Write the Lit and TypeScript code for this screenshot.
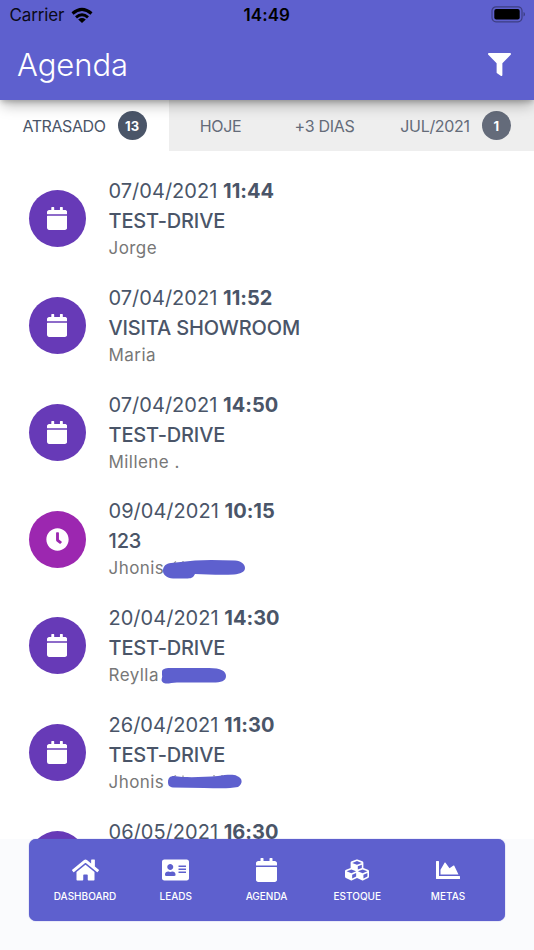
import { LitElement, html, css, svg } from "lit";
import { customElement, property } from "lit/decorators.js";
import { classMap } from "lit/directives/class-map.js";

const icons: Record<string, { w: number; d: string }> = {
  calendar: { w: 448, d: "M12 192h424c6.6 0 12 5.4 12 12v260c0 26.5-21.5 48-48 48H48c-26.5 0-48-21.5-48-48V204c0-6.6 5.4-12 12-12zm436-44v-36c0-26.5-21.5-48-48-48h-48V12c0-6.6-5.4-12-12-12h-40c-6.6 0-12 5.4-12 12v52H160V12c0-6.6-5.4-12-12-12h-40c-6.6 0-12 5.4-12 12v52H48C21.5 64 0 85.5 0 112v36c0 6.6 5.4 12 12 12h424c6.6 0 12-5.4 12-12z" },
  clock: { w: 512, d: "M256,8C119,8,8,119,8,256S119,504,256,504,504,393,504,256,393,8,256,8Zm92.49,313h0l-20,25a16,16,0,0,1-22.49,2.5h0l-67-49.72a40,40,0,0,1-15-31.23V112a16,16,0,0,1,16-16h32a16,16,0,0,1,16,16V256l58,42.5A16,16,0,0,1,348.49,321Z" },
  filter: { w: 512, d: "M487.976 0H24.028C2.71 0-8.047 25.866 7.058 40.971L192 225.941V432c0 7.831 3.821 15.17 10.237 19.662l80 55.98C298.02 518.69 320 507.493 320 487.98V225.941l184.947-184.97C520.021 25.896 509.338 0 487.976 0z" },
  home: { w: 576, d: "M280.37 148.26L96 300.11V464a16 16 0 0 0 16 16l112.06-.29a16 16 0 0 0 15.92-16V368a16 16 0 0 1 16-16h64a16 16 0 0 1 16 16v95.64a16 16 0 0 0 16 16.05L464 480a16 16 0 0 0 16-16V300L295.67 148.26a12.19 12.19 0 0 0-15.3 0zM571.6 251.47L488 182.56V44.05a12 12 0 0 0-12-12h-56a12 12 0 0 0-12 12v72.61L318.47 43a48 48 0 0 0-61 0L4.34 251.47a12 12 0 0 0-1.6 16.9l25.5 31A12 12 0 0 0 45.15 301l235.22-193.74a12.19 12.19 0 0 1 15.3 0L530.9 301a12 12 0 0 0 16.9-1.6l25.5-31a12 12 0 0 0-1.7-16.93z" },
  card: { w: 576, d: "M528 32H48C21.5 32 0 53.5 0 80v352c0 26.5 21.5 48 48 48h480c26.5 0 48-21.5 48-48V80c0-26.5-21.5-48-48-48zm-352 96c35.3 0 64 28.7 64 64s-28.7 64-64 64-64-28.7-64-64 28.7-64 64-64zm112 236.8c0 10.6-10 19.2-22.4 19.2H86.4C74 384 64 375.4 64 364.8v-19.2c0-31.8 30.1-57.6 67.2-57.6h5c12.3 5.1 25.7 8 39.8 8s27.6-2.9 39.8-8h5c37.1 0 67.2 25.8 67.2 57.6v19.2zM512 312c0 4.4-3.6 8-8 8H360c-4.4 0-8-3.6-8-8v-16c0-4.4 3.6-8 8-8h144c4.4 0 8 3.6 8 8v16zm0-64c0 4.4-3.6 8-8 8H360c-4.4 0-8-3.6-8-8v-16c0-4.4 3.6-8 8-8h144c4.4 0 8 3.6 8 8v16zm0-64c0 4.4-3.6 8-8 8H360c-4.4 0-8-3.6-8-8v-16c0-4.4 3.6-8 8-8h144c4.4 0 8 3.6 8 8v16z" },
  cubes: { w: 512, d: "M488.6 250.2L392 214V105.5c0-15-9.3-28.4-23.4-33.7l-100-37.5c-8.1-3.1-17.1-3.1-25.3 0l-100 37.5c-14.1 5.3-23.4 18.7-23.4 33.7V214l-96.6 36.2C9.3 255.5 0 268.9 0 283.9V394c0 13.6 7.7 26.1 19.9 32.2l100 50c10.1 5.1 22.1 5.1 32.2 0l103.9-52 103.9 52c10.1 5.1 22.1 5.1 32.2 0l100-50c12.2-6.1 19.9-18.6 19.9-32.2V283.9c0-15-9.3-28.4-23.4-33.7zM358 214.8l-85 31.9v-68.2l85-37v73.3zM154 104.1l102-38.2 102 38.2v.6l-102 41.4-102-41.4v-.6zm84 291.1l-85 42.5v-79.1l85-38.8v75.4zm0-112l-102 41.4-102-41.4v-.6l102-38.2 102 38.2v.6zm240 112l-85 42.5v-79.1l85-38.8v75.4zm0-112l-102 41.4-102-41.4v-.6l102-38.2 102 38.2v.6z" },
  area: { w: 512, d: "M500 384c6.6 0 12 5.4 12 12v40c0 6.6-5.4 12-12 12H12c-6.6 0-12-5.4-12-12V76c0-6.6 5.4-12 12-12h40c6.6 0 12 5.4 12 12v308h436zM372.7 159.5L288 216l-85.3-113.7c-5.1-6.8-15.5-6.3-19.9 1L96 248v104h384l-89.9-187.8c-3.2-6.5-11.4-8.7-17.4-4.7z" },
};

@customElement("fa-icon")
class FaIcon extends LitElement {
  @property() name = "calendar";
  static styles = css`
    :host { display: flex; height: 24px; }
    svg { height: 100%; width: auto; fill: currentColor; }
  `;
  render() {
    const icon = icons[this.name];
    return html`<svg viewBox="0 0 ${icon.w} 512">${svg`<path d=${icon.d}></path>`}</svg>`;
  }
}

interface Visit { date: string; time: string; title: string; name: string; icon?: string; mask?: string; peek?: string }

/* Mask outlines share the origin of the name line's left edge; peek holds the faint marks above a mask. */
const visits: Visit[] = [
  { date: "07/04/2021", time: "11:44", title: "TEST-DRIVE", name: "Jorge" },
  { date: "07/04/2021", time: "11:52", title: "VISITA SHOWROOM", name: "Maria" },
  { date: "07/04/2021", time: "14:50", title: "TEST-DRIVE", name: "Millene ." },
  { date: "09/04/2021", time: "10:15", title: "123", name: "Jhonis", icon: "clock",
    peek: "M65 7L67 5.500M74 6V5",
    mask: "M54 15C54 10 57 7.500 62 7L86 4.500C98 3.500 112 4 126 4.500C132 5 136 8 136 12C136 16 131 18 125 18.500C112 19 98 18.500 86 18C84 22 82 22.500 77 22.500L64 22.500C58 22 54 19 54 15Z" },
  { date: "20/04/2021", time: "14:30", title: "TEST-DRIVE", name: "Reylla",
    mask: "M53 9C53 6 56 5 61 5L100 5C112 5 117 8 117 13C117 18 112 19.500 104 19.500L68 19.500C62 19.500 57 22 54 19.500C51 17 54 14.500 53 12Z" },
  { date: "26/04/2021", time: "11:30", title: "TEST-DRIVE", name: "Jhonis",
    peek: "M65 6.500L67 5.500M74 7V5.500M105 6.500V5M113 6V5",
    mask: "M59 12C59 8 61 6 65 6C77 8 95 7 109 6C117 5 124 4 128 6C134 8 134 14 129 17C119 19 107 18 95 18L64 17.500C60 17 59 15 59 12Z" },
  { date: "06/05/2021", time: "16:30", title: "TEST-DRIVE", name: "" },
];

const tabs = [
  { label: "ATRASADO", count: "13", cls: "late" },
  { label: "HOJE", cls: "today" },
  { label: "+3 DIAS", cls: "days" },
  { label: "JUL/2021", count: "1", cls: "month" },
];

const nav = [
  ["home", "DASHBOARD"], ["card", "LEADS"], ["calendar", "AGENDA"], ["cubes", "ESTOQUE"], ["area", "METAS"],
];

@customElement("app-root")
class AppRoot extends LitElement {
  static styles = css`
    :host { display: block; font-family: Inter, sans-serif; }
    * { box-sizing: border-box; }
    .screen { width: 534px; height: 950px; background: #fff; overflow: hidden; position: relative; display: flex; flex-direction: column; }
    header { height: 100px; flex: none; background: #5e60ce; position: relative; z-index: 1; box-shadow: 0 7px 13px -2px rgba(0,0,0,.28), 0 3px 5px -1px rgba(0,0,0,.2); }
    .status { height: 30px; display: grid; grid-template-columns: 1fr auto 1fr; align-items: center; padding: 0 8px 0 9.500px; color: #0b0a18; font-size: 17px; }
    .carrier { display: flex; align-items: center; gap: 7px; letter-spacing: -.15px; }
    .wifi { width: 22px; height: 17px; }
    .clock { font-weight: 600; letter-spacing: .1px; color: #000; margin-right: 2px; }
    .battery { width: 35px; height: 17px; justify-self: end; margin-top: -1px; }
    .bar { height: 70px; display: flex; align-items: center; justify-content: space-between; padding: 0 23px 0 17px; color: #fff; }
    h1 { margin: 0; font-weight: 350; font-size: 31px; line-height: 40px; letter-spacing: -.05px; }
    .bar fa-icon { height: 23px; margin-top: -1px; }
    .tabs { height: 51px; flex: none; display: grid; grid-template-columns: 169px 103px 105px 157px; background: #eee; color: #646b79; font-size: 16px; letter-spacing: -.3px; }
    .tab { display: flex; align-items: center; justify-content: center; gap: 12px; white-space: nowrap; }
    .active { background: #fff; color: #4a5568; letter-spacing: -.4px; }
    .count { width: 29px; height: 29px; border-radius: 50%; background: #646b7a; color: #fff; display: grid; place-items: center; font-weight: 700; font-size: 13px; letter-spacing: 0; }
    .active .count { background: #4a5568; }
    .list { padding-top: 25px; }
    .visit { height: 106.750px; display: flex; gap: 23px; padding-left: 28.500px; color: #4a5568; }
    .disc { width: 57px; height: 57px; flex: none; margin-top: 14.300px; border-radius: 50%; background: #673ab7; color: #fff; display: grid; place-items: center; }
    .disc.clocked { background: #9c27b0; }
    .disc fa-icon { height: 23px; }
    .info { position: relative; }
    .when { font-size: 20px; line-height: 31px; letter-spacing: .02px; }
    .when b { font-weight: 700; }
    .title { font-size: 20px; line-height: 29px; font-weight: 450; letter-spacing: -.15px; }
    .name { font-size: 17px; line-height: 25px; letter-spacing: .45px; color: #777; position: relative; }
    .mask { position: absolute; left: 0; top: 0; width: 140px; height: 25px; fill: #5e60ce; }
    .peek { stroke: #999; stroke-width: 1.300; }
    .dock { position: absolute; left: 0; right: 0; bottom: 0; height: 111px; padding: 0 29px; background: #fafbfd; }
    nav { height: 82px; border-radius: 7px; background: #5e60ce; color: #fff; display: grid; grid-template-columns: repeat(5, 90.750px); justify-content: center; padding: 19px 1px 0 0; box-shadow: 0 0 1px #5e60ce; }
    .item { display: flex; flex-direction: column; align-items: center; gap: 7px; font-size: 10px; line-height: 15px; font-weight: 500; }
    .item fa-icon { height: 24px; }
  `;

  render() {
    return html`<div class="screen">
      <header>
        <div class="status">
          <div class="carrier">Carrier
            <svg class="wifi" viewBox="0 0 22 17"><g fill="none" stroke="#000" stroke-width="3"><path d="M1.500 6.500Q11-1.800 20.500 6.500"></path><path d="M5 10.300Q11 5.200 17 10.300"></path></g><path d="M11 16L7.200 12.400Q11 9.800 14.800 12.400Z"></path></svg>
          </div>
          <div class="clock">14:49</div>
          <svg class="battery" viewBox="0 0 35 17"><rect x="1" y=".8" width="30" height="15" rx="4" fill="none" stroke="#3d3e83" stroke-width="1.200"></rect><rect x="3.300" y="3.100" width="25.400" height="10.400" rx="2"></rect><path d="M32.500 6Q34 6.500 34 8.300T32.500 10.600Z" fill="#3d3e83"></path></svg>
        </div>
        <div class="bar"><h1>Agenda</h1><fa-icon name="filter"></fa-icon></div>
      </header>
      <div class="tabs">
        ${tabs.map((t, i) => html`<div class=${classMap({ tab: true, active: i === 0, [t.cls]: true })}>
          <span>${t.label}</span>${t.count ? html`<span class="count">${t.count}</span>` : ""}
        </div>`)}
      </div>
      <div class="list">
        ${visits.map((v) => html`<div class="visit">
          <div class=${classMap({ disc: true, clocked: v.icon === "clock" })}><fa-icon name=${v.icon ?? "calendar"}></fa-icon></div>
          <div class="info">
            <div class="when">${v.date} <b>${v.time}</b></div>
            <div class="title">${v.title}</div>
            <div class="name">${v.name}${v.mask ? html`<svg class="mask" viewBox="0 0 140 25"><path class="peek" d=${v.peek ?? ""}></path><path d=${v.mask}></path></svg>` : ""}</div>
          </div>
        </div>`)}
      </div>
      <div class="dock"><nav>
        ${nav.map(([icon, label]) => html`<div class="item"><fa-icon name=${icon}></fa-icon><span>${label}</span></div>`)}
      </nav></div>
    </div>`;
  }
}
